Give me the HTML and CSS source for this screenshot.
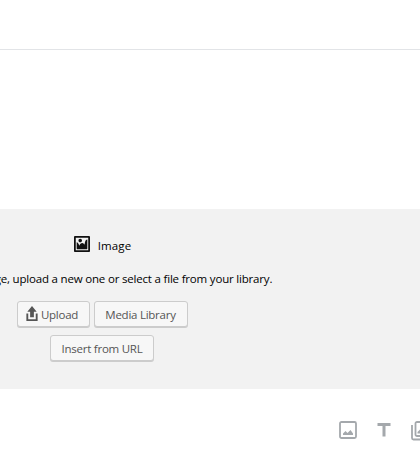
FILE: index.html
```
<!DOCTYPE html>
<html lang="en">
<head>
    <meta charset="UTF-8">
    <meta name="viewport" content="width=device-width, initial-scale=1">
    <title>Editor</title>
    <link rel="stylesheet" href="styles.css">
</head>
<body>
    <header class="topbar"></header>
    <main class="content">
        <div class="placeholder">
            <div class="label">
                <svg class="label-icon" width="16" height="16" viewBox="1 1 18 18">
                    <path fill="#111" d="M2.250 1h15.500c.69 0 1.250.56 1.250 1.250v15.500c0 .69-.56 1.250-1.250 1.250H2.250C1.560 19 1 18.440 1 17.750V2.250C1 1.560 1.560 1 2.250 1zM17 17V3H3v14h14zM10 6c0-1.100-.9-2-2-2s-2 .9-2 2 .9 2 2 2 2-.9 2-2zm3 5s0-6 3-6v10c0 .55-.45 1-1 1H5c-.55 0-1-.45-1-1V8c2 0 3 4 3 4s1-3 3-3 3 2 3 2z"/>
                </svg>
                <span>Image</span>
            </div>
            <p class="instructions">Drag an image, upload a new one or select a file from your library.</p>
            <div class="buttons">
                <button class="button upload">
                    <svg class="upload-icon" width="12" height="16" viewBox="4 2 12 16">
                        <path fill="#555" d="M8 14V8H5l5-6 5 6h-3v6H8zm-2 2v-6H4v8h12v-8h-2v6H6z"/>
                    </svg>
                    <span>Upload</span>
                </button>
                <button class="button library">Media Library</button>
            </div>
            <div class="buttons">
                <button class="button url">Insert from URL</button>
            </div>
        </div>
        <div class="inserter">
            <svg width="18" height="18" viewBox="0 0 18 18">
                <rect x="1" y="1" width="16" height="16" rx="1.5" fill="none" stroke="#a4a8ac" stroke-width="1.8"/>
                <path fill="#a4a8ac" d="M4 14v-1.500l2.500-2.500 2 2L11.500 9l2.500 3.500V14z"/>
            </svg>
            <svg width="18" height="18" viewBox="0 0 18 18">
                <path fill="#a4a8ac" d="M2.500 2h13v3h-5v10.500h-3V5h-5z"/>
            </svg>
            <svg width="20" height="20" viewBox="0 0 20 20">
                <rect x="4.500" y="1" width="14" height="14" rx="1.500" fill="none" stroke="#a4a8ac" stroke-width="1.8"/>
                <path fill="none" stroke="#a4a8ac" stroke-width="1.8" d="M1 4v13a1.500 1.500 0 0 0 1.500 1.500h13"/>
                <path fill="#a4a8ac" d="M6.500 12.500V11L9 8.500l2 2L13.500 7l3 4v1.500z"/>
            </svg>
        </div>
    </main>
</body>
</html>
```
FILE: styles.css
```
body {
    margin: 0;
    height: 463px;
    overflow: hidden;
    background-color: #fff;
    color: #000;
    font-family: "Open Sans", "Noto Sans", sans-serif;
    font-size: 11.5px;
}
.topbar {
    height: 49px;
    border-bottom: 1px solid #e2e4e7;
}
.content {
    padding-top: 159px;
}
/* the block is wider than the window and runs off its left side */
.placeholder {
    box-sizing: border-box;
    width: 636px;
    height: 180px;
    margin-left: -216px;
    padding-top: 26px;
    background-color: #f2f2f2;
    display: flex;
    flex-direction: column;
    align-items: center;
}
.label {
    display: flex;
    align-items: center;
    gap: 8px;
    height: 18px;
    padding-left: 1px;
    font-weight: 500;
    letter-spacing: 0.1px;
}
.label span {
    padding-top: 2px;
}
.instructions {
    margin: 17px 0 13px;
    line-height: 18px;
    letter-spacing: -0.19px;
    white-space: nowrap;
}
.buttons {
    display: flex;
    gap: 4px;
    margin-bottom: 8px;
}
.button {
    box-sizing: border-box;
    height: 26px;
    padding: 0;
    border: 1px solid #ccc;
    border-radius: 3px;
    background-color: #f7f7f7;
    box-shadow: 0 1px 0 #ccc;
    color: #555;
    font-family: inherit;
    font-size: 11.5px;
    letter-spacing: -0.25px;
    display: flex;
    align-items: center;
    justify-content: center;
    gap: 3px;
}
.upload {
    width: 73px;
    padding-right: 2px;
}
.upload-icon {
    height: 15px;
    margin-top: -2px;
}
.library {
    width: 94px;
}
.url {
    width: 104px;
}
.inserter {
    display: flex;
    gap: 18px;
    width: 120px;
    margin: 32px 0 0 339px;
}
```
